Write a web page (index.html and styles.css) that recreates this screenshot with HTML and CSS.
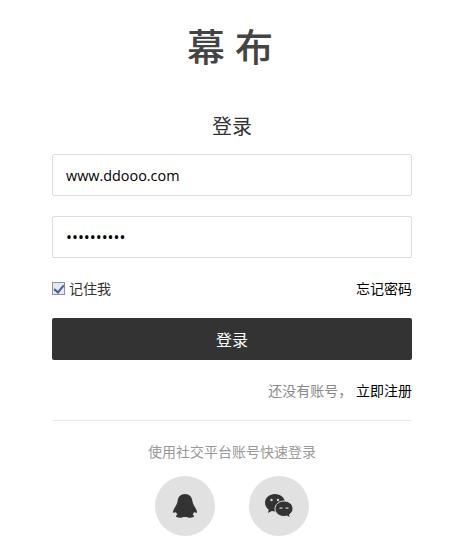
FILE: index.html
```html
<!DOCTYPE html>
<html>
	<head>
		<meta charset="UTF-8">
		<title>登录</title>
		<link rel="stylesheet" href="styles.css">
	</head>
	<body>
		<div class="box">
			<div class="logo">幕布</div>
			<h1 class="title">登录</h1>
			<form class="form">
				<input class="field" type="text" value="www.ddooo.com">
				<input class="field field-pwd" type="password" value="1234567890">
				<div class="row">
					<label class="remember"><input class="check" type="checkbox" checked>记住我</label>
					<a href="#" class="link">忘记密码</a>
				</div>
				<button class="btn" type="button">登录</button>
			</form>
			<div class="signup">还没有账号， <a href="#" class="link">立即注册</a></div>
			<div class="line"></div>
			<div class="other">使用社交平台账号快速登录</div>
			<div class="social">
				<a href="#" class="circle">
					<svg width="24" height="24" viewBox="0 0 24 24">
						<path fill="#333" d="M12 0C7.500 0 5 3 4.600 7C4.300 9.500 3 11.500 1.500 14C.6 15.500 0 17 0 18.500C.8 19 2 18.800 3 18C3.300 19 3.800 20 4.500 20.600C3 21.200 2.800 22.300 3.500 23C5.500 24 9 23.800 10.500 23L13.500 23C15 23.800 18.500 24 20.500 23C21.200 22.300 21 21.200 19.500 20.600C20.200 20 20.700 19 21 18C22 18.800 23.200 19 24 18.500C24 17 23.400 15.500 22.500 14C21 11.500 19.700 9.500 19.400 7C19 3 16.500 0 12 0Z"/>
					</svg>
				</a>
				<a href="#" class="circle">
					<svg width="28" height="24" viewBox="0 0 28 24">
						<path fill="#333" d="M10 0C4.500 0 0 3.800 0 8.700C0 11.500 1.400 13.900 3.600 15.500L3.200 19L6.800 17C7.800 17.300 8.900 17.500 10 17.500C15.500 17.500 20 13.600 20 8.700C20 3.800 15.500 0 10 0Z"/>
						<path fill="#333" stroke="#e1e1e1" stroke-width="1" d="M19 7C14 7 10 10.500 10 14.800C10 19.100 14 22.500 19 22.500C20 22.500 21 22.300 21.900 22L25.200 23.800L24.600 20.500C26.700 19.100 28 17.100 28 14.800C28 10.500 24 7 19 7Z"/>
						<circle fill="#d8d8d8" cx="6.500" cy="6" r="1.200"/>
						<circle fill="#d8d8d8" cx="13" cy="6" r="1.200"/>
						<rect fill="#d8d8d8" x="14.500" y="13.500" width="3" height="1.200"/>
						<rect fill="#d8d8d8" x="20.500" y="13.500" width="3" height="1.200"/>
					</svg>
				</a>
			</div>
		</div>
	</body>
</html>
```

FILE: styles.css
```css
* {
	margin: 0;
	padding: 0;
	box-sizing: border-box;
}

body {
	background: #fff;
	color: #333;
	font-family: "Open Sans", "Noto Sans CJK SC", sans-serif;
	font-size: 14px;
}

a {
	color: #000;
	text-decoration: none;
}

.box {
	width: 360px;
	margin: 0 0 0 52px;
}

.logo {
	height: 50px;
	margin-top: 21px;
	padding-left: 6px;
	text-align: center;
	font-size: 38px;
	font-weight: 500;
	line-height: 50px;
	letter-spacing: 10px;
	color: #444;
}

.title {
	margin-top: 41px;
	height: 30px;
	text-align: center;
	font-size: 20px;
	font-weight: 400;
	line-height: 30px;
}

.form {
	display: flex;
	flex-direction: column;
	margin-top: 12px;
}

.field {
	width: 360px;
	height: 42px;
	margin-bottom: 20px;
	padding: 0 13px;
	border: 1px solid #ddd;
	border-radius: 2px;
	font-family: "Open Sans", sans-serif;
	font-size: 14.4px;
	color: #000;
}

.field-pwd {
	font-size: 15.8px;
}

.row {
	display: flex;
	justify-content: space-between;
	align-items: center;
	height: 20px;
}

.remember {
	display: flex;
	align-items: center;
}

.check {
	appearance: none;
	position: relative;
	width: 13px;
	height: 13px;
	margin-right: 4px;
	border: 1px solid #8e8f9a;
	background: #e6e8f2;
}

.check:checked::after {
	content: "";
	position: absolute;
	left: 3px;
	top: 0;
	width: 4px;
	height: 8px;
	border: solid #4a5a9c;
	border-width: 0 2px 2px 0;
	transform: rotate(40deg);
}

.btn {
	height: 42px;
	margin-top: 20px;
	border: none;
	border-radius: 2px;
	background: #333;
	color: #fff;
	font-family: "Noto Sans CJK SC", sans-serif;
	font-size: 16px;
}

.signup {
	margin-top: 21px;
	height: 20px;
	text-align: right;
	line-height: 20px;
	color: #888;
}

.line {
	height: 1px;
	margin-top: 19px;
	background: #e8e8e8;
}

.other {
	margin-top: 21px;
	height: 20px;
	text-align: center;
	line-height: 20px;
	color: #999;
}

.social {
	display: flex;
	justify-content: center;
	gap: 34px;
	margin-top: 14px;
}

.circle {
	display: flex;
	justify-content: center;
	align-items: center;
	width: 60px;
	height: 60px;
	border-radius: 50%;
	background: #e1e1e1;
}
```
